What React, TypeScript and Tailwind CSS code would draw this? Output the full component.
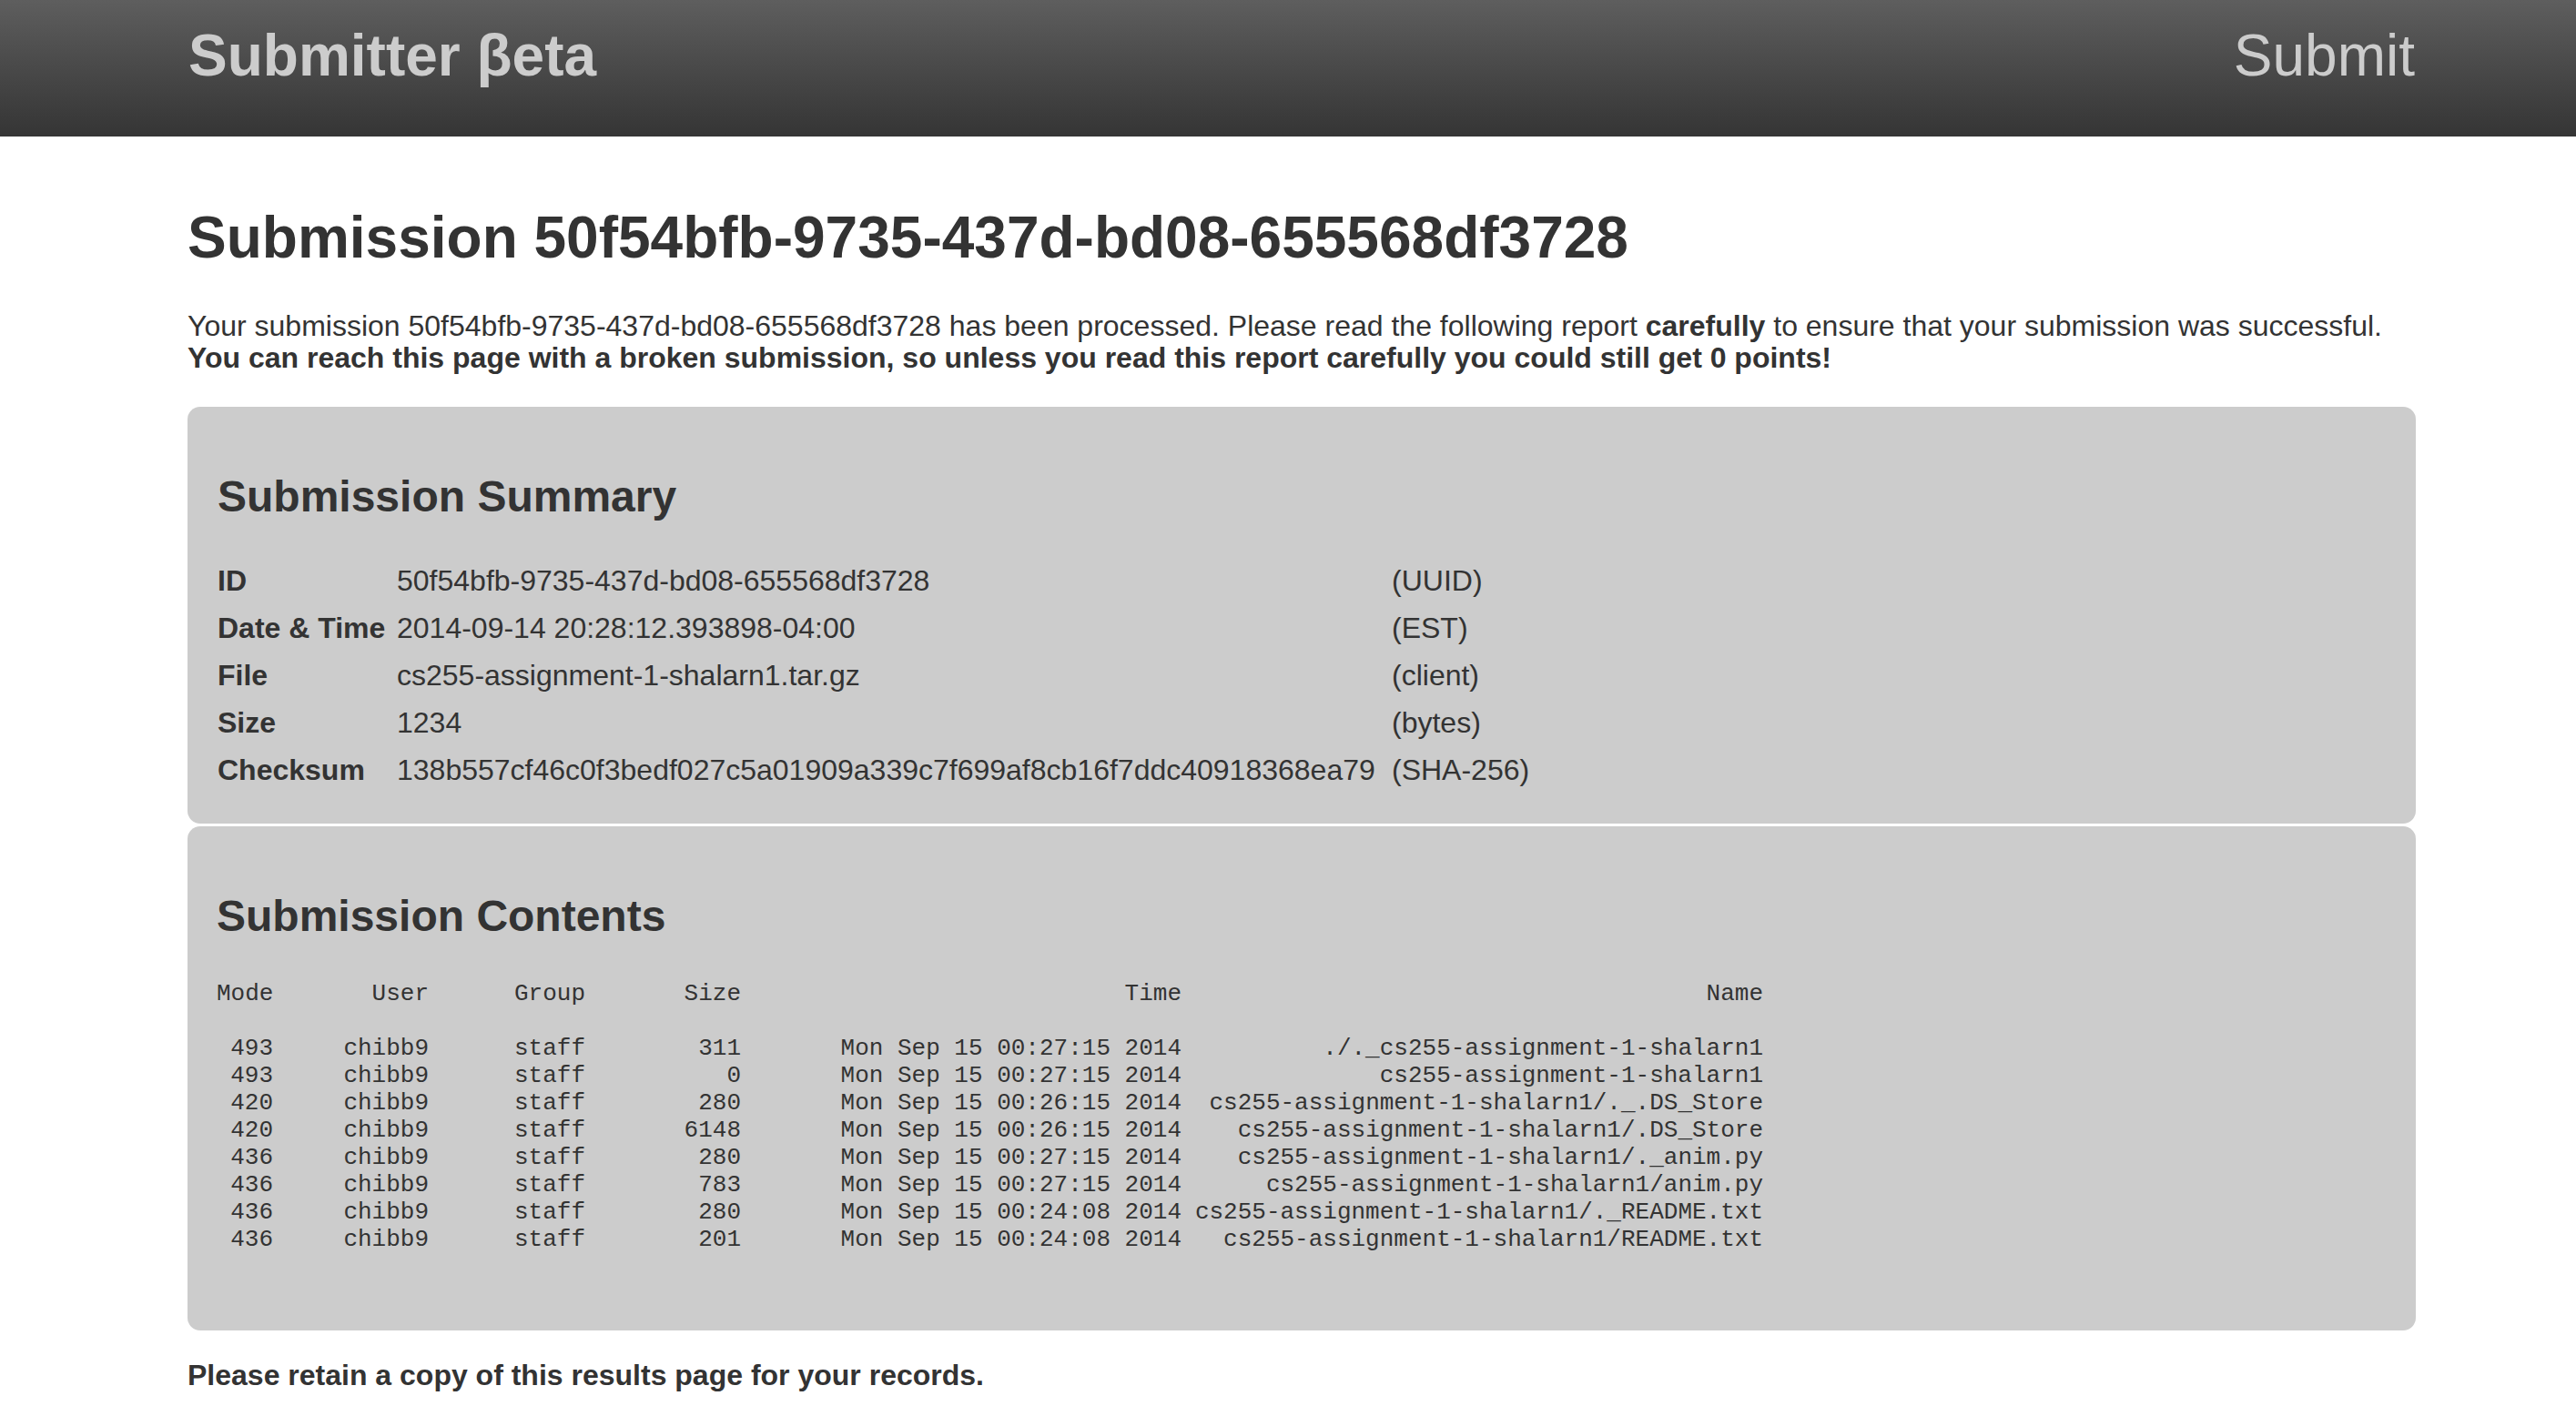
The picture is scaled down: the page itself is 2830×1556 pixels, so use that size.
import React from 'react';

const summaryRows = [
  { label: 'ID', value: '50f54bfb-9735-437d-bd08-655568df3728', unit: '(UUID)' },
  { label: 'Date & Time', value: '2014-09-14 20:28:12.393898-04:00', unit: '(EST)' },
  { label: 'File', value: 'cs255-assignment-1-shalarn1.tar.gz', unit: '(client)' },
  { label: 'Size', value: '1234', unit: '(bytes)' },
  {
    label: 'Checksum',
    value: '138b557cf46c0f3bedf027c5a01909a339c7f699af8cb16f7ddc40918368ea79',
    unit: '(SHA-256)',
  },
];

const files = [
  { mode: '493', size: '311', time: 'Mon Sep 15 00:27:15 2014', name: './._cs255-assignment-1-shalarn1' },
  { mode: '493', size: '0', time: 'Mon Sep 15 00:27:15 2014', name: 'cs255-assignment-1-shalarn1' },
  { mode: '420', size: '280', time: 'Mon Sep 15 00:26:15 2014', name: 'cs255-assignment-1-shalarn1/._.DS_Store' },
  { mode: '420', size: '6148', time: 'Mon Sep 15 00:26:15 2014', name: 'cs255-assignment-1-shalarn1/.DS_Store' },
  { mode: '436', size: '280', time: 'Mon Sep 15 00:27:15 2014', name: 'cs255-assignment-1-shalarn1/._anim.py' },
  { mode: '436', size: '783', time: 'Mon Sep 15 00:27:15 2014', name: 'cs255-assignment-1-shalarn1/anim.py' },
  { mode: '436', size: '280', time: 'Mon Sep 15 00:24:08 2014', name: 'cs255-assignment-1-shalarn1/._README.txt' },
  { mode: '436', size: '201', time: 'Mon Sep 15 00:24:08 2014', name: 'cs255-assignment-1-shalarn1/README.txt' },
];

// fixed-width listing columns, same as the tar listing
const gridCols = 'grid grid-cols-[62px_171px_229px_114px_484px_639px] whitespace-pre';

const FileRow = ({ mode, user, group, size, time, name }: Record<string, string>) => (
  <div className={gridCols}>
    <span className="text-right">{mode}</span>
    <span className="text-right">{user}</span>
    <span className="pl-[94px]">{group}</span>
    <span className="text-right">{size}</span>
    <span className="text-right">{time}</span>
    <span className="text-right">{name}</span>
  </div>
);

export default function App() {
  const uuid = '50f54bfb-9735-437d-bd08-655568df3728';

  return (
    <div className="min-h-screen bg-white text-[#333] font-['Liberation_Sans',Arial,sans-serif]">
      {/* Top bar */}
      <header className="h-[150px] bg-linear-to-b from-[#5e5e5e] to-[#353535] pl-[207px] pr-[177px] pt-[29px] flex items-start justify-between text-[#ccc]">
        <span className="text-[64px] leading-[64px] font-bold">Submitter βeta</span>
        <span className="text-[64px] leading-[64px]">Submit</span>
      </header>

      <main className="pl-[206px] pr-[176px]">
        <h1 className="mt-[79px] text-[64px] leading-[64px] font-bold">Submission {uuid}</h1>

        <p className="mt-[48px] text-[32px] leading-[35px]">
          Your submission {uuid} has been processed. Please read the following report{' '}
          <b>carefully</b> to ensure that your submission was successful.
          <br />
          <b>You can reach this page with a broken submission, so unless you read this report carefully you could still get 0 points!</b>
        </p>

        {/* Summary card */}
        <section className="mt-[36px] bg-[#ccc] rounded-[14px] pl-[33px] pt-[75px] pb-[33px]">
          <h2 className="text-[48px] leading-[48px] font-bold">Submission Summary</h2>
          <div className="mt-[42px] text-[32px] leading-[52px]">
            {summaryRows.map((r) => (
              <div key={r.label} className="grid grid-cols-[197px_1093px_auto] whitespace-nowrap">
                <span className="font-bold">{r.label}</span>
                <span>{r.value}</span>
                <span>{r.unit}</span>
              </div>
            ))}
          </div>
        </section>

        {/* Contents card */}
        <section className="mt-[3px] bg-[#ccc] rounded-[14px] pl-[32px] pt-[75px] pb-[85px]">
          <h2 className="text-[48px] leading-[48px] font-bold">Submission Contents</h2>
          <div className="mt-[46px] font-['Liberation_Mono','Courier_New',monospace] text-[26px] leading-[30px]">
            <FileRow mode="Mode" user="User" group="Group" size="Size" time="Time" name="Name" />
            <div className="h-[30px]" />
            {files.map((f, i) => (
              <FileRow key={i} {...f} user="chibb9" group="staff" />
            ))}
          </div>
        </section>

        <p className="mt-[32px] text-[32px] leading-[35px] font-bold">
          Please retain a copy of this results page for your records.
        </p>
      </main>
    </div>
  );
}
